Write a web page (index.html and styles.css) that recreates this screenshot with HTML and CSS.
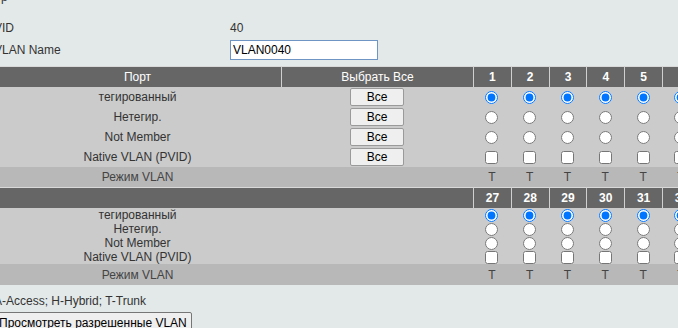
FILE: index.html
```html
<!DOCTYPE html>
<html lang="ru">
<head>
<meta charset="utf-8">
<title>VLAN</title>
<link rel="stylesheet" href="styles.css">
</head>
<body>
<div class="page">
  <div class="cut"><span>р</span></div>
  <div class="form">
    <div class="label">VID</div>
    <div class="value">40</div>
    <div class="label">VLAN Name</div>
    <div class="value"><input class="name" type="text" value="VLAN0040"></div>
  </div>

  <table class="ports">
    <colgroup>
      <col class="c-name"><col class="c-all">
      <col class="c-port"><col class="c-port"><col class="c-port"><col class="c-port">
      <col class="c-port"><col class="c-port"><col class="c-port"><col class="c-port">
    </colgroup>
    <tr class="head">
      <th class="first">Порт</th><th class="txt">Выбрать Все</th>
      <th>1</th><th>2</th><th>3</th><th>4</th><th>5</th><th>6</th><th>7</th><th>8</th>
    </tr>
    <tr class="row">
      <td>тегированный</td><td><button class="all">Все</button></td>
      <td><input type="radio" name="p1" checked></td><td><input type="radio" name="p2" checked></td><td><input type="radio" name="p3" checked></td><td><input type="radio" name="p4" checked></td>
      <td><input type="radio" name="p5" checked></td><td><input type="radio" name="p6" checked></td><td><input type="radio" name="p7" checked></td><td><input type="radio" name="p8" checked></td>
    </tr>
    <tr class="row">
      <td>Нетегир.</td><td><button class="all">Все</button></td>
      <td><input type="radio" name="p1"></td><td><input type="radio" name="p2"></td><td><input type="radio" name="p3"></td><td><input type="radio" name="p4"></td>
      <td><input type="radio" name="p5"></td><td><input type="radio" name="p6"></td><td><input type="radio" name="p7"></td><td><input type="radio" name="p8"></td>
    </tr>
    <tr class="row">
      <td>Not Member</td><td><button class="all">Все</button></td>
      <td><input type="radio" name="p1"></td><td><input type="radio" name="p2"></td><td><input type="radio" name="p3"></td><td><input type="radio" name="p4"></td>
      <td><input type="radio" name="p5"></td><td><input type="radio" name="p6"></td><td><input type="radio" name="p7"></td><td><input type="radio" name="p8"></td>
    </tr>
    <tr class="row">
      <td>Native VLAN (PVID)</td><td><button class="all">Все</button></td>
      <td><input type="checkbox"></td><td><input type="checkbox"></td><td><input type="checkbox"></td><td><input type="checkbox"></td>
      <td><input type="checkbox"></td><td><input type="checkbox"></td><td><input type="checkbox"></td><td><input type="checkbox"></td>
    </tr>
    <tr class="mode">
      <td>Режим VLAN</td><td></td>
      <td>T</td><td>T</td><td>T</td><td>T</td><td>T</td><td>T</td><td>T</td><td>T</td>
    </tr>

    <tr class="head">
      <th class="first" colspan="2"></th>
      <th>27</th><th>28</th><th>29</th><th>30</th><th>31</th><th>32</th><th>33</th><th>34</th>
    </tr>
    <tr class="row compact">
      <td>тегированный</td><td></td>
      <td><input type="radio" name="q27" checked></td><td><input type="radio" name="q28" checked></td><td><input type="radio" name="q29" checked></td><td><input type="radio" name="q30" checked></td>
      <td><input type="radio" name="q31" checked></td><td><input type="radio" name="q32" checked></td><td><input type="radio" name="q33" checked></td><td><input type="radio" name="q34" checked></td>
    </tr>
    <tr class="row compact">
      <td>Нетегир.</td><td></td>
      <td><input type="radio" name="q27"></td><td><input type="radio" name="q28"></td><td><input type="radio" name="q29"></td><td><input type="radio" name="q30"></td>
      <td><input type="radio" name="q31"></td><td><input type="radio" name="q32"></td><td><input type="radio" name="q33"></td><td><input type="radio" name="q34"></td>
    </tr>
    <tr class="row compact">
      <td>Not Member</td><td></td>
      <td><input type="radio" name="q27"></td><td><input type="radio" name="q28"></td><td><input type="radio" name="q29"></td><td><input type="radio" name="q30"></td>
      <td><input type="radio" name="q31"></td><td><input type="radio" name="q32"></td><td><input type="radio" name="q33"></td><td><input type="radio" name="q34"></td>
    </tr>
    <tr class="row compact">
      <td>Native VLAN (PVID)</td><td></td>
      <td><input type="checkbox"></td><td><input type="checkbox"></td><td><input type="checkbox"></td><td><input type="checkbox"></td>
      <td><input type="checkbox"></td><td><input type="checkbox"></td><td><input type="checkbox"></td><td><input type="checkbox"></td>
    </tr>
    <tr class="mode tall">
      <td>Режим VLAN</td><td></td>
      <td>T</td><td>T</td><td>T</td><td>T</td><td>T</td><td>T</td><td>T</td><td>T</td>
    </tr>
  </table>

  <div class="legend">A-Access; H-Hybrid; T-Trunk</div>
  <button class="view">Просмотреть разрешенные VLAN</button>
</div>
</body>
</html>
```

FILE: styles.css
```css
html, body {
  margin: 0;
  padding: 0;
  overflow: hidden;
  background: #e3e9e9;
}

body {
  font-family: "Liberation Sans", Arial, sans-serif;
  font-size: 12px;
  color: #333;
  width: 678px;
  height: 328px;
}

.page {
  margin-left: -6px;
  width: 900px;
}

.cut {
  height: 5px;
  overflow: hidden;
  padding-left: 7px;
}

.cut span {
  display: block;
  margin-top: -10px;
  line-height: 14px;
}

.form {
  display: grid;
  grid-template-columns: 236px auto;
  grid-auto-rows: 22px;
  align-items: center;
  margin-top: 12px;
}

.name {
  box-sizing: border-box;
  width: 148px;
  height: 20px;
  margin: 0;
  padding: 0 2px;
  border: 1px solid #6f95c4;
  background: #fff;
  font-family: "Liberation Sans", Arial, sans-serif;
  font-size: 12px;
  color: #000;
}

.ports {
  margin-top: 5px;
  table-layout: fixed;
  width: 781px;
  border-collapse: separate;
  border-spacing: 0;
}

.c-name { width: 287px; }
.c-all { width: 192px; }
.c-port { width: 37.8px; }

.ports th,
.ports td {
  padding: 0;
  text-align: center;
  white-space: nowrap;
  overflow: hidden;
}

.head th {
  height: 20px;
  background: #666;
  color: #fff;
  font-weight: bold;
  border-top: 1px solid #d9d9d9;
  border-left: 1px solid #d0d0d0;
}

.head th.first {
  border-left: none;
  font-weight: normal;
}

.head th.txt {
  font-weight: normal;
}

.row td {
  height: 20px;
  background: #cbcbcb;
}

.row.compact td {
  height: 14px;
  line-height: 14px;
}

.mode td {
  height: 20px;
  background: #b8b8b8;
  color: #444;
}

.mode.tall td {
  height: 21px;
}

.ports input {
  display: block;
  margin: 0 auto;
}

.all {
  display: block;
  margin: 0 auto;
  width: 54px;
  height: 18px;
  padding: 0;
  font-family: "Liberation Sans", Arial, sans-serif;
  font-size: 12px;
  color: #000;
  background: #efefef;
  border: 1px solid #9a9a9a;
  border-radius: 2px;
}

.legend {
  margin-top: 9px;
  line-height: 14px;
}

.view {
  margin-top: 4px;
  height: 21px;
  padding: 0 4px;
  font-family: "Liberation Sans", Arial, sans-serif;
  font-size: 12px;
  color: #000;
  background: #efefef;
  border: 1px solid #767676;
  border-radius: 2px;
}
```
